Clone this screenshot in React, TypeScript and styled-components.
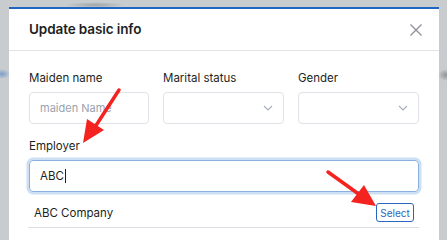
import React from "react";
import styled, { createGlobalStyle } from "styled-components";

const Global = createGlobalStyle`
  html, body { margin: 0; padding: 0; }
  body {
    width: 447px;
    height: 240px;
    overflow: hidden;
    font-family: Inter, "Noto Sans", sans-serif;
    background-color: #c9ccce;
    background-image:
      radial-gradient(ellipse 30px 3px at 95px 5px, rgba(150,155,160,0.8), rgba(150,155,160,0) ),
      radial-gradient(ellipse 8px 5px at 2px 74px, rgba(90,140,200,0.7), rgba(90,140,200,0)),
      radial-gradient(ellipse 8px 6px at 446px 75px, rgba(130,134,138,0.8), rgba(130,134,138,0));
  }
`;

const Page = styled.div`
  padding: 7px 8px 0 9px;
  position: relative;
`;

const Modal = styled.div`
  width: 430px;
  background: #ffffff;
  border-top: 2px solid #1f65c2;
  height: 240px;
`;

const Header = styled.div`
  height: 42px;
  border-bottom: 1px solid #e2e4e7;
  display: flex;
  align-items: center;
  justify-content: space-between;
  padding: 0 17px 2px 20px;
  box-sizing: border-box;
`;

const Title = styled.h2`
  margin: 0;
  font-size: 13.5px;
  font-weight: 600;
  color: #1c1f23;
  letter-spacing: -0.1px;
`;

const Close = styled.button`
  border: none;
  background: none;
  padding: 0;
  width: 12px;
  height: 12px;
  display: flex;
  margin-top: 2px;
`;

const Body = styled.div`
  padding: 19px 20px 0 20px;
`;

const Row = styled.div`
  display: grid;
  grid-template-columns: 120px 121px 121px;
  column-gap: 14px;
`;

const Field = styled.div`
  display: flex;
  flex-direction: column;
`;

const Label = styled.label`
  font-size: 11.5px;
  line-height: 16px;
  color: #1c1f23;
  margin-bottom: 6px;
`;

const Input = styled.div<{ $focused?: boolean }>`
  height: 32px;
  box-sizing: border-box;
  border: 1px solid ${(p) => (p.$focused ? "#8cb0de" : "#dfe2e6")};
  border-radius: 4px;
  display: flex;
  align-items: center;
  justify-content: space-between;
  padding: 0 10px;
  font-size: 11.5px;
  color: #1c1f23;
  box-shadow: ${(p) => (p.$focused ? "0 0 0 2.5px #cddff3" : "none")};
`;

const Placeholder = styled.span`
  color: #9aa2ad;
  font-size: 11px;
`;

const Caret = styled.span`
  display: inline-block;
  width: 1px;
  height: 14px;
  background: #1c1f23;
  margin-left: 1px;
  vertical-align: middle;
`;

const EmployerField = styled(Field)`
  margin-top: 14px;
`;

const ResultRow = styled.div`
  margin-top: 6px;
  height: 29px;
  border-bottom: 1px solid #dcdfe4;
  display: flex;
  align-items: center;
  justify-content: space-between;
  padding: 0 5px 0 6px;
  margin-left: -1px;
  font-size: 11.5px;
  color: #1c1f23;
`;

const SelectButton = styled.button`
  font-family: Inter, "Noto Sans", sans-serif;
  font-size: 10px;
  color: #2a66bd;
  background: #fff;
  border: 1px solid #2a66bd;
  border-radius: 3px;
  height: 19px;
  width: 38px;
  padding: 0;
  display: flex;
  align-items: center;
  justify-content: center;
`;

const Arrows = styled.svg`
  position: absolute;
  left: 0;
  top: 0;
  pointer-events: none;
`;

const Chevron = () => (
  <svg width="10" height="6" viewBox="0 0 10 6">
    <path d="M1 1 L5 5 L9 1" fill="none" stroke="#a7afba" strokeWidth="1.1" />
  </svg>
);

export default function App() {
  return (
    <>
      <Global />
      <Page>
        <Modal>
          <Header>
            <Title>Update basic info</Title>
            <Close aria-label="close">
              <svg width="12" height="12" viewBox="0 0 12 12">
                <path d="M0.5 0.5 L11.5 11.5 M11.5 0.5 L0.5 11.5" stroke="#8b9097" strokeWidth="1.3" />
              </svg>
            </Close>
          </Header>
          <Body>
            <Row>
              <Field>
                <Label>Maiden name</Label>
                <Input>
                  <Placeholder>maiden Name</Placeholder>
                </Input>
              </Field>
              <Field>
                <Label>Marital status</Label>
                <Input>
                  <span />
                  <Chevron />
                </Input>
              </Field>
              <Field>
                <Label>Gender</Label>
                <Input>
                  <span />
                  <Chevron />
                </Input>
              </Field>
            </Row>
            <EmployerField>
              <Label>Employer</Label>
              <Input $focused>
                <span>
                  ABC<Caret />
                </span>
              </Input>
            </EmployerField>
            <ResultRow>
              <span>ABC Company</span>
              <SelectButton>Select</SelectButton>
            </ResultRow>
          </Body>
        </Modal>
        <Arrows width="447" height="240" viewBox="0 0 447 240">
          <line x1="119" y1="90" x2="95" y2="127" stroke="#f4231f" strokeWidth="3.5" strokeLinecap="round" />
          <polygon points="83,143 87,119 104,130" fill="#f4231f" />
          <line x1="328" y1="172" x2="360" y2="195" stroke="#f4231f" strokeWidth="3.5" strokeLinecap="round" />
          <polygon points="376,206 351,202 364,185" fill="#f4231f" />
        </Arrows>
      </Page>
    </>
  );
}
